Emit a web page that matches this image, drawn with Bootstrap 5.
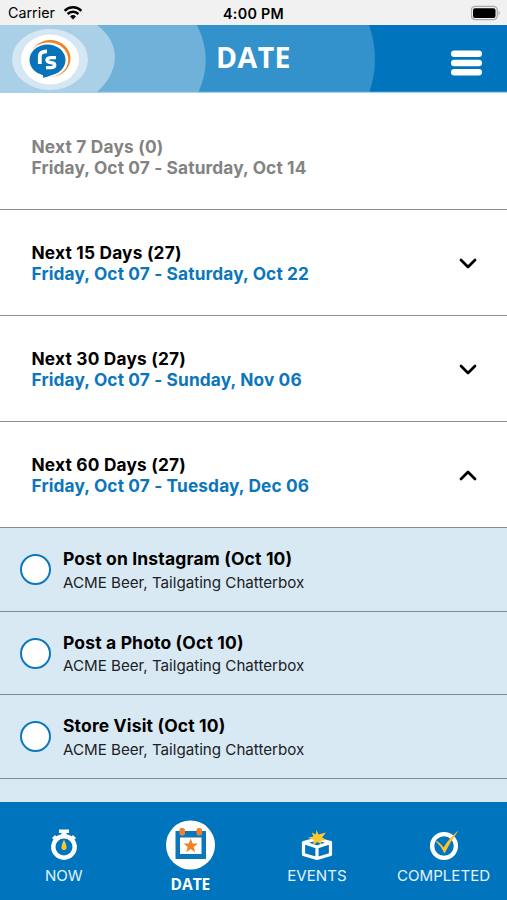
<!DOCTYPE html>
<html lang="en">
<head>
<meta charset="utf-8">
<meta name="viewport" content="width=device-width, initial-scale=1">
<title>Date</title>
<link href="https://cdn.jsdelivr.net/npm/bootstrap@5.3.0/dist/css/bootstrap.min.css" rel="stylesheet">
<style>
body{font-family:Inter,"Liberation Sans",sans-serif;color:#000;height:900px;background:#fff}
.status{height:25px;background:#f1f1f1;font-size:14.3px;line-height:27px;flex:none}
.status .clock{font-weight:600;letter-spacing:.3px}
.top-bar{height:68px;background:#0075be;flex:none}
.top-bar .waves{position:absolute;left:0;top:0}
.top-bar h1{font:700 28.5px/65px "Open Sans",sans-serif;letter-spacing:.4px}
.burger{width:31px;height:26px;margin:25px 25px 0 0}
.period{height:106px;border-bottom:1px solid #8d8d8d;padding:0 29px 0 31.5px;font-size:17.3px;line-height:21px;font-weight:700;letter-spacing:.13px}
.period .head{letter-spacing:.2px}
.period.first{height:117px;color:#838383;padding-top:12px}
.period .range{color:#0b76bb}
.period.first .range{color:inherit}
.task-row{height:83.5px;background:#d9e9f3;border-bottom:1px solid #7f8b92;padding:1px 20px 0;gap:12px}
.task-row .dot{width:31px;height:31px;border:2px solid #0b78c0;border-radius:50%;background:#fff;flex:none}
.task-row .name{font-size:17.5px;line-height:23px;font-weight:700;margin-top:1px;letter-spacing:.15px}
.task-row .who{font-size:15.15px;line-height:23px;color:#1a2226;margin-top:.5px}
.tabs{height:98px;background:#0075be;flex:none;padding-left:.5px}
.tabs a{color:#e4f2fb;font-size:15.1px;line-height:20px;width:126.6px;text-decoration:none}
.tabs a.on{color:#fff;font:700 15.5px/20px "Open Sans",sans-serif}
.tabs svg{display:block;flex:none}
</style>
<script src="https://cdn.jsdelivr.net/npm/bootstrap@5.3.0/dist/js/bootstrap.bundle.min.js"></script>
</head>
<body class="d-flex flex-column overflow-hidden">
<div class="status d-flex justify-content-between position-relative">
  <div class="d-flex align-items-center ps-2"><span>Carrier</span>
    <svg class="ms-2" width="20" height="16" viewBox="0 0 20 16" fill="none" stroke="#000" stroke-width="2.5"><path d="M1.6 5.800a12 12 0 0 1 16.800 0M4.600 9a7.700 7.700 0 0 1 10.800 0"/><path d="M7 11.500a4.300 4.300 0 0 1 6 0L10 14.500z" fill="#000" stroke="none"/></svg></div>
  <div class="clock position-absolute w-100 text-center">4:00 PM</div>
  <svg class="me-1" width="32" height="25" viewBox="0 0 32 25"><rect x=".3" y="6.400" width="26" height="13.200" rx="4" fill="#f1f1f1" stroke="#aaa" stroke-width="1.300"/><rect x="2" y="8.300" width="22.500" height="9.600" rx="2" fill="#000"/><path d="M27.600 10.500q2.400 2.400 0 5z" fill="#aaa"/></svg>
</div>
<header class="top-bar position-relative d-flex justify-content-end">
  <svg class="waves" width="507" height="68" viewBox="0 0 507 68">
    <path d="M0 0H369Q381 34 369 68H0z" fill="#3391cb"/>
    <path d="M0 0H197Q214 34 198 68H0z" fill="#70b1da"/>
    <path d="M0 0H97C121 18 121 46 96 68H0z" fill="#aad0e7"/>
    <ellipse cx="50" cy="34.500" rx="38" ry="30.500" fill="#d4e7f3"/>
    <ellipse cx="50" cy="34.500" rx="29" ry="25" fill="#fff"/>
    <ellipse cx="50.300" cy="33.500" rx="20.200" ry="18.500" fill="#f58220"/>
    <ellipse cx="48.500" cy="34.800" rx="19.800" ry="17.300" fill="#fff"/>
    <ellipse cx="47.500" cy="35" rx="18" ry="15.500" fill="#0873b8"/>
    <path d="M43 46V52.700Q50 52 57 46z" fill="#0873b8"/>
    <path d="M39.800 39V31Q39.800 26.400 47 26.400" fill="none" stroke="#fff" stroke-width="3.800"/>
    <path d="M56 32.600H51.500C45.500 32.600 45.800 37.300 50.500 37.500C56.200 37.800 56 42.600 50.500 42.600H46" fill="none" stroke="#fff" stroke-width="3.400"/>
    <rect y="66.800" width="507" height="1.200" fill="#a5d3ef"/>
  </svg>
  <h1 class="position-absolute w-100 text-center text-white m-0">DATE</h1>
  <svg class="burger position-relative" viewBox="0 0 31 26" fill="#fff"><rect y=".5" width="31" height="6.500" rx="3.200"/><rect y="9.700" width="31" height="6.500" rx="3.200"/><rect y="18.900" width="31" height="6.500" rx="3.200"/></svg>
</header>
<main class="flex-grow-1 overflow-hidden">
  <section class="period first d-flex align-items-center"><div><div class="head">Next 7 Days (0)</div><div class="range">Friday, Oct 07 - Saturday, Oct 14</div></div></section>
  <section class="period d-flex align-items-center justify-content-between"><div><div class="head">Next 15 Days (27)</div><div class="range">Friday, Oct 07 - Saturday, Oct 22</div></div>
    <svg width="20" height="14" viewBox="0 0 20 14" fill="none" stroke="#000" stroke-width="2.800" stroke-linecap="round" stroke-linejoin="round"><path d="M3 4L10 11L17 4"/></svg></section>
  <section class="period d-flex align-items-center justify-content-between"><div><div class="head">Next 30 Days (27)</div><div class="range">Friday, Oct 07 - Sunday, Nov 06</div></div>
    <svg width="20" height="14" viewBox="0 0 20 14" fill="none" stroke="#000" stroke-width="2.800" stroke-linecap="round" stroke-linejoin="round"><path d="M3 4L10 11L17 4"/></svg></section>
  <section class="period d-flex align-items-center justify-content-between"><div><div class="head">Next 60 Days (27)</div><div class="range">Friday, Oct 07 - Tuesday, Dec 06</div></div>
    <svg width="20" height="14" viewBox="0 0 20 14" fill="none" stroke="#000" stroke-width="2.800" stroke-linecap="round" stroke-linejoin="round"><path d="M3 11L10 4L17 11"/></svg></section>
  <div class="task-row d-flex align-items-center"><span class="dot"></span><div><div class="name">Post on Instagram (Oct 10)</div><div class="who">ACME Beer, Tailgating Chatterbox</div></div></div>
  <div class="task-row d-flex align-items-center"><span class="dot"></span><div><div class="name">Post a Photo (Oct 10)</div><div class="who">ACME Beer, Tailgating Chatterbox</div></div></div>
  <div class="task-row d-flex align-items-center"><span class="dot"></span><div><div class="name">Store Visit (Oct 10)</div><div class="who">ACME Beer, Tailgating Chatterbox</div></div></div>
  <div class="task-row d-flex align-items-center"><span class="dot"></span><div><div class="name">Post a Review (Oct 10)</div><div class="who">ACME Beer, Tailgating Chatterbox</div></div></div>
</main>
<nav class="tabs d-flex">
  <a href="#" class="d-flex flex-column align-items-center">
    <svg width="32" height="64" viewBox="48.500 802 32 64"><path d="M59.500 829.500h10v3.500h-2.500v4h-5v-4h-2.500z" fill="#fff"/><path d="M52.500 838l3-3 3 3-3 3zM76.500 838l-3-3-3 3 3 3z" fill="#fff"/><circle cx="64.500" cy="847" r="10.700" fill="none" stroke="#fff" stroke-width="4.400"/><path d="M64.500 839.500Q67 845 67 847.500a2.500 2.500 0 0 1-5 0Q62 845 64.500 839.500z" fill="#fdc82f"/></svg>NOW</a>
  <a href="#" class="on d-flex flex-column align-items-center">
    <svg width="50" height="72" viewBox="165.500 802 50 72"><circle cx="191" cy="845" r="24.500" fill="#fff"/><path d="M176 831h30.500v28H176zM180.500 837.500v16.500h21.500v-16.500z" fill="#0b76b9" fill-rule="evenodd"/><rect x="180" y="828" width="5.500" height="7.500" rx="2.200" fill="#f08030"/><rect x="197" y="828" width="5.500" height="7.500" rx="2.200" fill="#f08030"/><path d="M191.200 838.500l1.900 5h5.300l-4.200 3.400 1.500 5.300-4.500-3.100-4.500 3.100 1.500-5.300-4.200-3.400h5.300z" fill="#f58220"/></svg>DATE</a>
  <a href="#" class="d-flex flex-column align-items-center">
    <svg width="34" height="64" viewBox="300 802 34 64"><path d="M303.500 842.500L317 847L330.500 842.500V854.500L317 858.500L303.500 854.500zM317 847V858M303.500 842.500L317 839L330.500 842.500" fill="none" stroke="#fff" stroke-width="3.200" stroke-linejoin="round"/><path d="M316.500 830l2 4.500 7.500-2-4 5 4.500 2.500-5.500.8.500 3.700-4-2.500-4.500 3 .8-5-6-2.200 5.700-1.300-1.700-4 4 2z" fill="#fdc82f"/></svg>EVENTS</a>
  <a href="#" class="d-flex flex-column align-items-center">
    <svg width="32" height="64" viewBox="428 802 32 64"><circle cx="444" cy="846" r="11.900" fill="none" stroke="#fff" stroke-width="4.300"/><path d="M435 840.500Q440 842 443.500 847.500Q450 837 458.500 830.500Q450 842 444.500 853.500Q441 846 435 840.500z" fill="#fdc02f"/></svg>COMPLETED</a>
</nav>
</body>
</html>
